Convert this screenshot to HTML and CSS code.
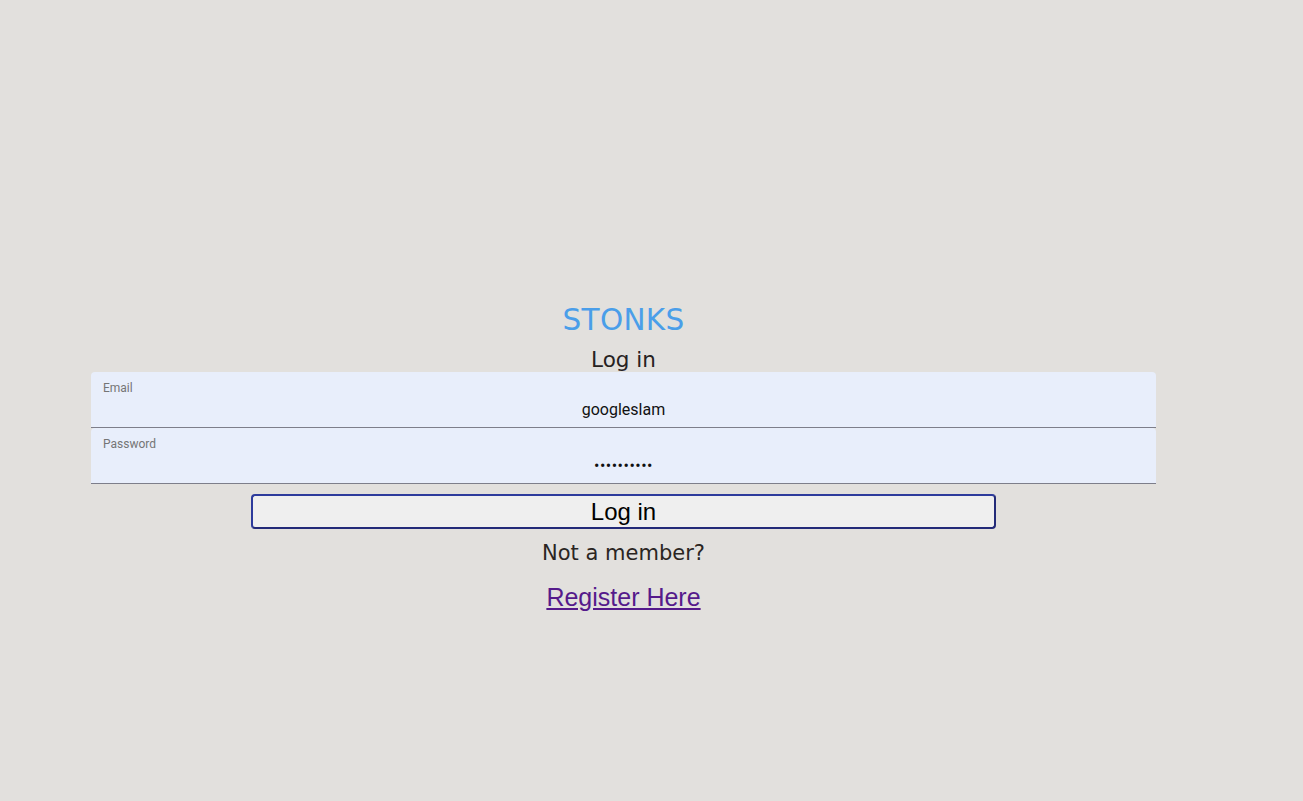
FILE: index.html
```html
<!DOCTYPE html>
<html>
<head>
<meta charset="utf-8">
<link rel="stylesheet" href="styles.css">
</head>
<body>
<div class="page">
  <div class="wrap">
    <h1 class="brand">STONKS</h1>
    <h2 class="title">Log in</h2>
    <form class="form">
      <label class="field">
        <span class="label">Email</span>
        <input class="input" type="text" value="googleslam">
      </label>
      <label class="field">
        <span class="label">Password</span>
        <input class="input pw" type="password" value="abcdefghij">
      </label>
      <button class="btn" type="button">Log in</button>
    </form>
    <p class="note">Not a member?</p>
    <a class="link" href="#">Register Here</a>
  </div>
</div>
</body>
</html>
```
FILE: styles.css
```css
html, body {
  margin: 0;
  padding: 0;
  background: #e2e0dd;
}
.page {
  padding: 301px 0 0 91px;
}
.wrap {
  width: 1065px;
  display: flex;
  flex-direction: column;
  align-items: center;
}
.brand {
  margin: 0 0 9px 0;
  font-family: "DejaVu Sans", sans-serif;
  font-weight: normal;
  font-size: 29.5px;
  line-height: 38px;
  color: #4a9ee9;
  letter-spacing: 0.3px;
}
.title {
  margin: 0;
  font-family: "DejaVu Sans", sans-serif;
  font-weight: normal;
  font-size: 21.5px;
  line-height: 24px;
  color: #26221f;
}
.form {
  width: 100%;
  display: flex;
  flex-direction: column;
  align-items: center;
}
.field {
  box-sizing: border-box;
  width: 100%;
  height: 56px;
  background: #e8eefb;
  border-radius: 4px 4px 0 0;
  border-bottom: 1px solid #7d7e8a;
  display: flex;
  flex-direction: column;
  padding: 9px 12px 0 12px;
}
.label {
  font-family: Roboto, sans-serif;
  font-size: 12px;
  line-height: 14px;
  color: #757575;
}
.input {
  border: none;
  background: transparent;
  outline: none;
  padding: 0;
  margin: 4px 0 0 0;
  font-family: Roboto, sans-serif;
  font-size: 16px;
  line-height: 22px;
  height: 22px;
  color: #111;
  text-align: center;
}
.pw {
  font-size: 16px;
  letter-spacing: 0.5px;
}
.btn {
  margin-top: 10px;
  width: 70%;
  height: 35px;
  box-sizing: border-box;
  border: 2px solid #232a78;
  border-top-color: #2d3b9c;
  border-left-color: #2d3b9c;
  border-radius: 4px;
  background: #efefef;
  font-family: "Liberation Sans", Arial, sans-serif;
  font-size: 24px;
  line-height: 28px;
  color: #000;
  padding: 0;
}
.note {
  margin: 9px 0 0 0;
  font-family: "DejaVu Sans", sans-serif;
  font-size: 21px;
  line-height: 30px;
  color: #2a2522;
}
.link {
  margin-top: 15px;
  font-family: "Liberation Sans", Arial, sans-serif;
  font-size: 25px;
  line-height: 28px;
  color: #551a8b;
  text-decoration: underline;
}
```
